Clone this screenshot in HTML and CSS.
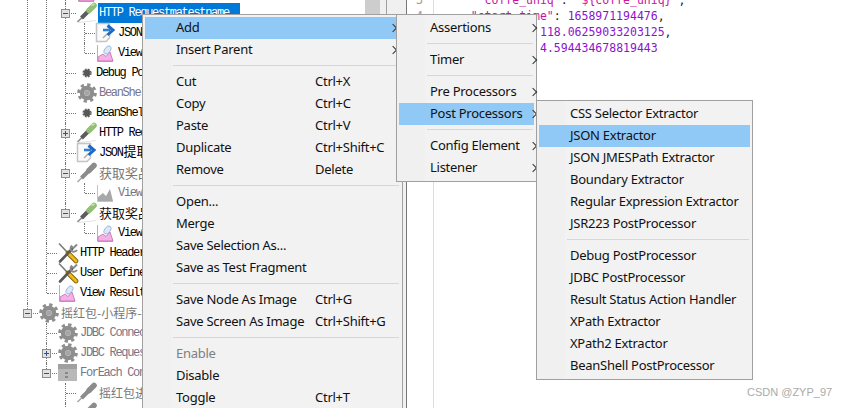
FILE: index.html
```html
<!DOCTYPE html>
<html lang="en">
<head>
    <meta charset="UTF-8">
    <meta name="viewport" content="width=device-width, initial-scale=1.0">
    <title>JMeter Add Menu</title>
    <link rel="stylesheet" href="styles.css">
</head>
<body>
    <svg class="sprite" width="0" height="0">
        <symbol id="pipette" viewBox="0 0 22 22">
            <path d="M3 20.500 L20 18.500" stroke="#e4e4e4" stroke-width="1"/>
            <path d="M1.500 20 L8 13.500" stroke="#8a8a8a" stroke-width="1.600"/>
            <path d="M5.500 16 L13 8.500" stroke="#5c5c5c" stroke-width="4"/>
            <path d="M13 8.500 L18 3.500" stroke="#8fc074" stroke-width="5.500" stroke-linecap="round"/>
            <path d="M15.500 3.500 L18.500 2" stroke="#c4e6b0" stroke-width="1.500"/>
        </symbol>
        <symbol id="pipette-off" viewBox="0 0 22 22">
            <path d="M1.500 20 L8 13.500" stroke="#a8a8a8" stroke-width="1.600"/>
            <path d="M5.500 16 L13 8.500" stroke="#8c8c8c" stroke-width="4"/>
            <path d="M13 8.500 L18 3.500" stroke="#8c8c8c" stroke-width="5.500" stroke-linecap="round"/>
        </symbol>
        <symbol id="json" viewBox="0 0 22 22">
            <path d="M1.500 1.500 H14.500 V16 L11 19.500 H1.500 Z" fill="#fafafa" stroke="#c4c4c4" stroke-width="1.500"/>
            <path d="M8 16 L12 12" stroke="#aaa" stroke-width="1.500"/>
            <path d="M8 8 H15" stroke="#2f7fd8" stroke-width="2.600"/>
            <path d="M12.500 3.500 L18 8 L12.500 13" fill="none" stroke="#1b68c6" stroke-width="3"/>
        </symbol>
        <symbol id="view" viewBox="0 0 22 22">
            <path d="M2.500 3 V19.500 H18" fill="none" stroke="#b4b4b4" stroke-width="1"/>
            <path d="M3 19 V15 L8 12 L11 14.500 L15 10 L18 19 Z" fill="#f6b0e8" stroke="#c667ad" stroke-width=".8"/>
            <ellipse cx="12.500" cy="8" rx="2.800" ry="4.500" transform="rotate(35 12.500 8)" fill="#dce8f8" stroke="#8eaed8" stroke-width=".8"/>
        </symbol>
        <symbol id="view-off" viewBox="0 0 22 22">
            <path d="M2.500 3 V19.500 H18" fill="none" stroke="#c4c4c4" stroke-width="1"/>
            <path d="M3 19 V15 L8 11 L11 14 L15 7 L18 19 Z" fill="#a8a8a8"/>
        </symbol>
        <symbol id="dot" viewBox="0 0 22 22">
            <circle cx="11" cy="11" r="3.400" fill="#585858"/>
            <circle cx="11" cy="11" r="4" fill="none" stroke="#585858" stroke-width="1.200" stroke-dasharray="2 1.200"/>
        </symbol>
        <symbol id="gear" viewBox="0 0 22 22">
            <circle cx="11" cy="11" r="8.300" fill="none" stroke="#8e8e8e" stroke-width="3" stroke-dasharray="3.300 3.200"/>
            <circle cx="11" cy="11" r="5" fill="none" stroke="#8e8e8e" stroke-width="4.500"/>
            <circle cx="11" cy="11" r="2.800" fill="#a6a6a6"/>
        </symbol>
        <symbol id="tools" viewBox="0 0 22 22">
            <path d="M2 1.500 L10 10" stroke="#7a7a7a" stroke-width="1.600"/>
            <path d="M11 11 L19 19" stroke="#7a5a00" stroke-width="4.600" stroke-linecap="round"/>
            <path d="M11 11 L19 19" stroke="#f0bb18" stroke-width="3" stroke-linecap="round"/>
            <path d="M3 19.500 L15 7" stroke="#5a5a5a" stroke-width="2.600" stroke-linecap="round"/>
            <path d="M20 2.500 L16.500 6 L14 4 M15 3.500 A4 4 0 0 0 14.500 9 A4 4 0 0 0 20 8" fill="none" stroke="#8a8a8a" stroke-width="2"/>
        </symbol>
        <symbol id="loop" viewBox="0 0 22 22">
            <rect x="1" y="2" width="19" height="17" fill="#b8b8b8"/>
            <rect x="1" y="2" width="19" height="5" fill="#a0a0a0"/>
            <rect x="8" y="10" width="3" height="2" fill="#888"/>
            <rect x="8" y="14" width="3" height="2" fill="#888"/>
        </symbol>
    </svg>

    <div class="tree-pane">
        <ul class="tree">
            <li>
                <ul>
                    <li>
                        <ul>
                            <li><div class="row"><svg class="ico"><use href="#view"/></svg></div></li>
                            <li>
                                <span class="box minus"></span>
                                <div class="row"><svg class="ico"><use href="#pipette"/></svg><span class="label picked">HTTP Requestmatestname</span></div>
                                <ul>
                                    <li><div class="row"><svg class="ico"><use href="#json"/></svg><span class="label">JSON Extractor</span></div></li>
                                    <li><div class="row"><svg class="ico"><use href="#view"/></svg><span class="label">View Results</span></div></li>
                                </ul>
                            </li>
                            <li><div class="row"><svg class="ico ico-sm"><use href="#dot"/></svg><span class="label">Debug PostProcessor</span></div></li>
                            <li><div class="row"><svg class="ico"><use href="#gear"/></svg><span class="label off">BeanShell Sampler</span></div></li>
                            <li><div class="row"><svg class="ico ico-sm"><use href="#dot"/></svg><span class="label">BeanShell Sampler</span></div></li>
                            <li>
                                <span class="box plus"></span>
                                <div class="row"><svg class="ico"><use href="#pipette"/></svg><span class="label">HTTP Request</span></div>
                            </li>
                            <li><div class="row"><svg class="ico"><use href="#json"/></svg><span class="label">JSON<span class="cjk-in">提取</span></span></div></li>
                            <li>
                                <span class="box minus"></span>
                                <div class="row"><svg class="ico"><use href="#pipette-off"/></svg><span class="label off cjk">获取奖品</span></div>
                                <ul>
                                    <li><div class="row"><svg class="ico"><use href="#view-off"/></svg><span class="label off">View Results</span></div></li>
                                </ul>
                            </li>
                            <li>
                                <span class="box minus"></span>
                                <div class="row"><svg class="ico"><use href="#pipette"/></svg><span class="label cjk">获取奖品</span></div>
                                <ul>
                                    <li><div class="row"><svg class="ico"><use href="#view"/></svg><span class="label">View Results</span></div></li>
                                </ul>
                            </li>
                        </ul>
                    </li>
                    <li><div class="row"><svg class="ico"><use href="#tools"/></svg><span class="label">HTTP Header Manager</span></div></li>
                    <li><div class="row"><svg class="ico"><use href="#tools"/></svg><span class="label">User Defined Variables</span></div></li>
                    <li><div class="row"><svg class="ico"><use href="#view"/></svg><span class="label">View Results Tree</span></div></li>
                </ul>
            </li>
            <li>
                <span class="box minus"></span>
                <div class="row"><svg class="ico"><use href="#gear"/></svg><span class="label off cjk cjk-sm">摇红包-小程序-接口</span></div>
                <ul>
                    <li><div class="row"><svg class="ico"><use href="#gear"/></svg><span class="label off">JDBC Connection</span></div></li>
                    <li>
                        <span class="box plus"></span>
                        <div class="row"><svg class="ico"><use href="#gear"/></svg><span class="label off">JDBC Request</span></div>
                    </li>
                    <li>
                        <span class="box minus"></span>
                        <div class="row"><svg class="ico"><use href="#loop"/></svg><span class="label off">ForEach Controller</span></div>
                        <ul>
                            <li><div class="row"><svg class="ico"><use href="#pipette-off"/></svg><span class="label off cjk cjk-sm">摇红包进度</span></div></li>
                            <li><div class="row"><svg class="ico"><use href="#pipette-off"/></svg></div></li>
                        </ul>
                    </li>
                </ul>
            </li>
        </ul>
    </div>
    <div class="scroll"><div class="thumb"></div></div>
    <div class="split"></div>
    <div class="editor">
        <pre class="gutter">3
4
5
6</pre>
        <pre class="code">     <span class="key">"coffe_uniq"</span>: <span class="key">"${coffe_uniq}"</span>,
    <span class="key">"start_time"</span>: <span class="num">1658971194476</span>,
 <span class="key">"longitude"</span>: <span class="num">118.06259033203125</span>,
  <span class="key">"latitude"</span>: <span class="num">4.594434678819443</span></pre>
    </div>

    <div class="menu menu-main">
        <div class="item has-sub active"><span class="name">Add</span></div>
        <div class="item has-sub"><span class="name">Insert Parent</span></div>
        <div class="sep"></div>
        <div class="item"><span class="name">Cut</span><span>Ctrl+X</span></div>
        <div class="item"><span class="name">Copy</span><span>Ctrl+C</span></div>
        <div class="item"><span class="name">Paste</span><span>Ctrl+V</span></div>
        <div class="item"><span class="name">Duplicate</span><span>Ctrl+Shift+C</span></div>
        <div class="item"><span class="name">Remove</span><span>Delete</span></div>
        <div class="sep"></div>
        <div class="item"><span class="name">Open...</span></div>
        <div class="item"><span class="name">Merge</span></div>
        <div class="item"><span class="name">Save Selection As...</span></div>
        <div class="item"><span class="name">Save as Test Fragment</span></div>
        <div class="sep"></div>
        <div class="item"><span class="name">Save Node As Image</span><span>Ctrl+G</span></div>
        <div class="item"><span class="name">Save Screen As Image</span><span>Ctrl+Shift+G</span></div>
        <div class="sep"></div>
        <div class="item disabled"><span class="name">Enable</span></div>
        <div class="item"><span class="name">Disable</span></div>
        <div class="item"><span class="name">Toggle</span><span>Ctrl+T</span></div>
    </div>

    <div class="menu menu-add">
        <div class="item has-sub">Assertions</div>
        <div class="sep"></div>
        <div class="item has-sub">Timer</div>
        <div class="sep"></div>
        <div class="item has-sub">Pre Processors</div>
        <div class="item has-sub active">Post Processors</div>
        <div class="sep"></div>
        <div class="item has-sub">Config Element</div>
        <div class="item has-sub">Listener</div>
    </div>

    <div class="menu menu-post">
        <div class="item">CSS Selector Extractor</div>
        <div class="item active">JSON Extractor</div>
        <div class="item">JSON JMESPath Extractor</div>
        <div class="item">Boundary Extractor</div>
        <div class="item">Regular Expression Extractor</div>
        <div class="item">JSR223 PostProcessor</div>
        <div class="sep"></div>
        <div class="item">Debug PostProcessor</div>
        <div class="item">JDBC PostProcessor</div>
        <div class="item">Result Status Action Handler</div>
        <div class="item">XPath Extractor</div>
        <div class="item">XPath2 Extractor</div>
        <div class="item">BeanShell PostProcessor</div>
    </div>

    <div class="watermark">CSDN @ZYP_97</div>
</body>
</html>
```

FILE: styles.css
```css
html, body {
    height: 100%;
}
body {
    margin: 0;
    display: flex;
    overflow: hidden;
    position: relative;
    background-color: #fff;
    font-family: "Noto Sans", "Noto Sans CJK SC", sans-serif;
}
.sprite {
    position: absolute;
}

/* tree on the left */
.tree-pane {
    flex: 0 0 365px;
    overflow: hidden;
    font-family: "Liberation Mono", "Noto Sans CJK SC", monospace;
    font-size: 12px;
    letter-spacing: -1.3px;
    color: #000;
}
.tree {
    margin: -17px 0 0 27px;
    padding: 0;
}
.tree ul {
    margin: 0;
    padding: 0 0 0 19px;
}
.tree li {
    list-style: none;
    position: relative;
}
.tree li::before {
    content: "";
    position: absolute;
    left: 0;
    top: 0;
    bottom: 0;
    border-left: 1px dotted #777;
}
.tree li:last-child::before {
    bottom: auto;
    height: 10px;
}
.tree li::after {
    content: "";
    position: absolute;
    left: 1px;
    top: 10px;
    width: 10px;
    border-top: 1px dotted #777;
}
.row {
    display: flex;
    height: 20px;
    line-height: 20px;
    padding-left: 11px;
    white-space: nowrap;
}
.ico {
    flex: none;
    width: 22px;
    height: 22px;
    margin: -1px 1px -1px 0;
}
.ico-sm {
    margin-right: -2px;
}
.off {
    color: #75758a;
}
.cjk {
    font-family: "Noto Sans CJK SC", sans-serif;
    font-size: 13px;
    letter-spacing: 0;
    color: #111;
}
.cjk-sm {
    font-size: 12px;
}
.cjk-in {
    font-family: "Noto Sans CJK SC", sans-serif;
    font-size: 13px;
    line-height: 1;
    letter-spacing: 0;
    margin-left: 1px;
}
.off.cjk {
    color: #777;
}
.picked {
    min-width: 141px;
    margin-left: -1px;
    padding-left: 1px;
    background-color: #0078d7;
    color: #fff;
}
.box {
    position: absolute;
    left: -4px;
    top: 6px;
    width: 7px;
    height: 7px;
    border: 1px solid #8e8e8e;
    background-color: #e2e2e2;
    z-index: 1;
}
.box::before {
    content: "";
    position: absolute;
    left: 1px;
    top: 3px;
    width: 5px;
    height: 1px;
    background-color: #33518e;
}
.plus::after {
    content: "";
    position: absolute;
    left: 3px;
    top: 1px;
    width: 1px;
    height: 5px;
    background-color: #33518e;
}

/* scrollbar and divider */
.scroll {
    flex: 0 0 21px;
    background-color: #f0f0f0;
    border-right: 1px solid #a0a0a0;
}
.thumb {
    width: 15px;
    height: 200px;
    background-color: #cdcdcd;
}
.split {
    flex: 0 0 19px;
    background-color: #f0f0f0;
    border-right: 1px solid #777;
}

/* code editor */
.editor {
    flex: 1;
    display: flex;
    overflow: hidden;
    font-size: 11.5px;
    line-height: 16px;
}
.editor pre {
    margin: -8px 0 0;
    font-family: "DejaVu Sans Mono", monospace;
}
.gutter {
    flex: 0 0 27px;
    box-sizing: border-box;
    padding-left: 9px;
    color: #999;
    border-right: 1px solid #ddd;
}
.code {
    padding-left: 9px;
    color: #222;
}
.key {
    color: #c814a0;
}
.num {
    color: #8a14cc;
}

/* popup menus */
.menu {
    position: absolute;
    box-sizing: border-box;
    padding: 2px;
    border: 1px solid #a0a0a0;
    font-size: 13px;
    letter-spacing: -0.26px;
    color: #111;
    background: linear-gradient(to right, #f0f0f0 28px, #f2f2f2 28px);
}
.menu-main {
    left: 142px;
    top: 14px;
    width: 261px;
}
.menu-add {
    left: 396px;
    top: 14px;
    width: 141px;
}
.menu-post {
    left: 536px;
    top: 100px;
    width: 217px;
}
.item {
    position: relative;
    display: flex;
    height: 22px;
    line-height: 21px;
    padding-left: 31px;
    white-space: nowrap;
}
.item.active {
    background-color: #90c8f6;
}
.item.disabled {
    color: #808080;
}
.name {
    width: 139px;
    flex: none;
}
.has-sub::after {
    content: "";
    position: absolute;
    right: 4px;
    top: 8px;
    width: 5px;
    height: 5px;
    border-top: 1px solid #333;
    border-right: 1px solid #333;
    transform: rotate(45deg);
}
.menu-add .has-sub::after {
    right: -2px;
}
.sep {
    height: 1px;
    margin: 4px 1px 5px 28px;
    background-color: #d7d7d7;
}
.watermark {
    position: absolute;
    left: 747px;
    top: 386px;
    font-family: "Liberation Sans", Arial, sans-serif;
    font-size: 11px;
    color: #aaa;
}
```
